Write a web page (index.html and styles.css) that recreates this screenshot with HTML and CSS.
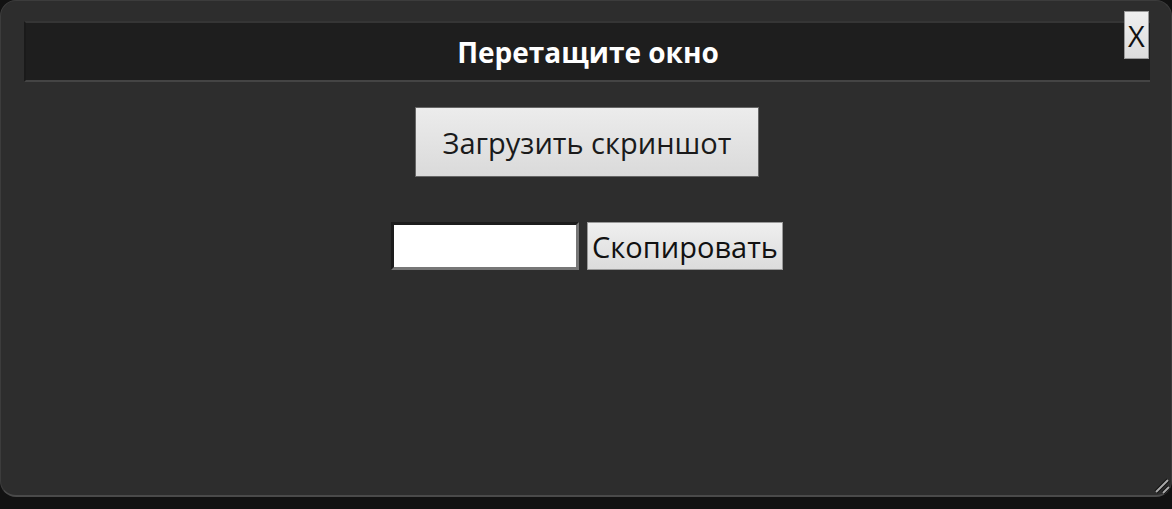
FILE: index.html
```html
<!DOCTYPE html>
<html>
<head>
    <title>Скриншот</title>
    <meta name="viewport" content="width=device-width, initial-scale=1.0">
    <link rel="stylesheet" href="styles.css">
</head>
<body>
    <div class="window">
        <!-- Drag bar -->
        <div class="title-bar">Перетащите окно</div>
        <button class="close-btn">X</button>

        <div class="actions">
            <button class="upload-btn">Загрузить скриншот</button>
        </div>

        <div class="copy-row">
            <input class="link-input" type="text">
            <button class="copy-btn">Скопировать</button>
        </div>

        <svg class="grip" width="16" height="16" viewBox="0 0 16 16">
            <path d="M2 14 L14 2" stroke="#111" stroke-width="4"/>
            <path d="M2 14 L14 2" stroke="#aaa" stroke-width="2"/>
            <path d="M9 15 L15 9" stroke="#111" stroke-width="4"/>
            <path d="M9 15 L15 9" stroke="#aaa" stroke-width="2"/>
        </svg>
    </div>
</body>
</html>
```

FILE: styles.css
```css
body {
    margin: 0;
    background: #121212;
    font-family: 'Open Sans', 'Noto Sans', sans-serif;
}

/* Window */
.window {
    position: relative;
    box-sizing: border-box;
    height: 497px;
    background: #2d2d2d;
    border: 1px solid #3c3c3c;
    border-bottom: 2px solid #4a4a4a;
    border-radius: 16px;
    padding: 20px 21px 0 23px;
}

.title-bar {
    height: 61px;
    box-sizing: border-box;
    background: #1e1e1e;
    border-top: 2px solid #353535;
    border-left: 2px solid #1a1a1a;
    border-bottom: 2px solid #444;
    display: flex;
    align-items: center;
    justify-content: center;
    color: #fff;
    font-weight: 700;
    font-size: 28px;
}

.close-btn {
    position: absolute;
    top: 10px;
    right: 22px;
    width: 25px;
    height: 48px;
    padding: 0;
    border: 1px solid #999;
    background: linear-gradient(#efefef, #dcdcdc);
    font-family: inherit;
    font-size: 29px;
    color: #111;
}

/* Buttons */
.actions {
    display: flex;
    justify-content: center;
    margin-top: 25px;
}

.upload-btn {
    width: 344px;
    height: 70px;
    border: 1px solid #666;
    background: linear-gradient(#ececec, #dadada);
    font-family: inherit;
    font-size: 29px;
    color: #1a1a1a;
}

.copy-row {
    display: flex;
    justify-content: center;
    gap: 8px;
    margin-top: 45px;
}

.link-input {
    box-sizing: border-box;
    width: 188px;
    height: 48px;
    border: 3px solid;
    border-color: #1c1c1c #777 #777 #1c1c1c;
    background: #fff;
}

.copy-btn {
    height: 48px;
    width: 196px;
    padding: 0;
    border: 1px solid #999;
    background: linear-gradient(#efefef, #dcdcdc);
    font-family: inherit;
    font-size: 29px;
    color: #111;
}

.grip {
    position: absolute;
    right: 1px;
    bottom: 1px;
}
```
